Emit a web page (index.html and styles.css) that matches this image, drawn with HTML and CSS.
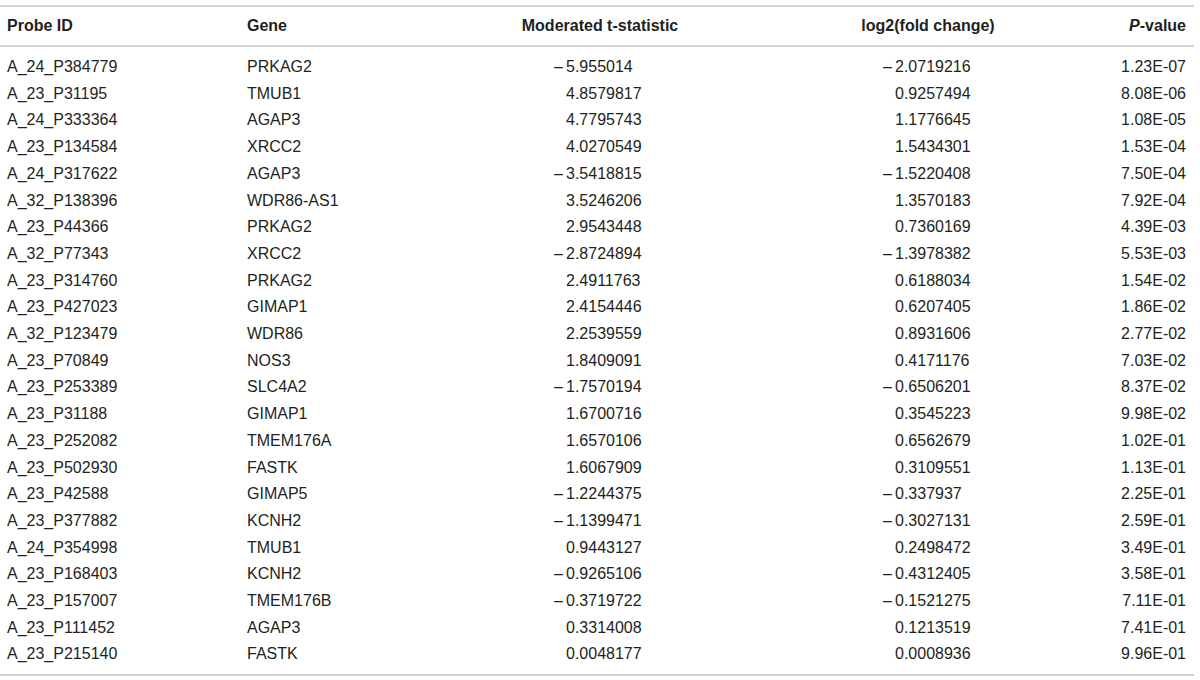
FILE: index.html
```html
<!DOCTYPE html>
<html lang="en">
<head>
<meta charset="utf-8">
<title>Probe table</title>
<link rel="stylesheet" href="styles.css">
</head>
<body>
<table class="data">
  <colgroup>
    <col class="c-probe"><col class="c-gene"><col class="c-t"><col class="c-log"><col class="c-p">
  </colgroup>
  <thead>
    <tr>
      <th class="probe">Probe ID</th>
      <th class="gene">Gene</th>
      <th class="mid">Moderated t-statistic</th>
      <th class="mid">log2(fold change)</th>
      <th class="pv"><i>P</i>-value</th>
    </tr>
  </thead>
  <tbody>
    <tr><td class="probe">A_24_P384779</td><td class="gene">PRKAG2</td><td class="t"><span class="neg">–</span>5.955014</td><td class="lg"><span class="neg">–</span>2.0719216</td><td class="pv">1.23E-07</td></tr>
    <tr><td class="probe">A_23_P31195</td><td class="gene">TMUB1</td><td class="t">4.8579817</td><td class="lg">0.9257494</td><td class="pv">8.08E-06</td></tr>
    <tr><td class="probe">A_24_P333364</td><td class="gene">AGAP3</td><td class="t">4.7795743</td><td class="lg">1.1776645</td><td class="pv">1.08E-05</td></tr>
    <tr><td class="probe">A_23_P134584</td><td class="gene">XRCC2</td><td class="t">4.0270549</td><td class="lg">1.5434301</td><td class="pv">1.53E-04</td></tr>
    <tr><td class="probe">A_24_P317622</td><td class="gene">AGAP3</td><td class="t"><span class="neg">–</span>3.5418815</td><td class="lg"><span class="neg">–</span>1.5220408</td><td class="pv">7.50E-04</td></tr>
    <tr><td class="probe">A_32_P138396</td><td class="gene">WDR86-AS1</td><td class="t">3.5246206</td><td class="lg">1.3570183</td><td class="pv">7.92E-04</td></tr>
    <tr><td class="probe">A_23_P44366</td><td class="gene">PRKAG2</td><td class="t">2.9543448</td><td class="lg">0.7360169</td><td class="pv">4.39E-03</td></tr>
    <tr><td class="probe">A_32_P77343</td><td class="gene">XRCC2</td><td class="t"><span class="neg">–</span>2.8724894</td><td class="lg"><span class="neg">–</span>1.3978382</td><td class="pv">5.53E-03</td></tr>
    <tr><td class="probe">A_23_P314760</td><td class="gene">PRKAG2</td><td class="t">2.4911763</td><td class="lg">0.6188034</td><td class="pv">1.54E-02</td></tr>
    <tr><td class="probe">A_23_P427023</td><td class="gene">GIMAP1</td><td class="t">2.4154446</td><td class="lg">0.6207405</td><td class="pv">1.86E-02</td></tr>
    <tr><td class="probe">A_32_P123479</td><td class="gene">WDR86</td><td class="t">2.2539559</td><td class="lg">0.8931606</td><td class="pv">2.77E-02</td></tr>
    <tr><td class="probe">A_23_P70849</td><td class="gene">NOS3</td><td class="t">1.8409091</td><td class="lg">0.4171176</td><td class="pv">7.03E-02</td></tr>
    <tr><td class="probe">A_23_P253389</td><td class="gene">SLC4A2</td><td class="t"><span class="neg">–</span>1.7570194</td><td class="lg"><span class="neg">–</span>0.6506201</td><td class="pv">8.37E-02</td></tr>
    <tr><td class="probe">A_23_P31188</td><td class="gene">GIMAP1</td><td class="t">1.6700716</td><td class="lg">0.3545223</td><td class="pv">9.98E-02</td></tr>
    <tr><td class="probe">A_23_P252082</td><td class="gene">TMEM176A</td><td class="t">1.6570106</td><td class="lg">0.6562679</td><td class="pv">1.02E-01</td></tr>
    <tr><td class="probe">A_23_P502930</td><td class="gene">FASTK</td><td class="t">1.6067909</td><td class="lg">0.3109551</td><td class="pv">1.13E-01</td></tr>
    <tr><td class="probe">A_23_P42588</td><td class="gene">GIMAP5</td><td class="t"><span class="neg">–</span>1.2244375</td><td class="lg"><span class="neg">–</span>0.337937</td><td class="pv">2.25E-01</td></tr>
    <tr><td class="probe">A_23_P377882</td><td class="gene">KCNH2</td><td class="t"><span class="neg">–</span>1.1399471</td><td class="lg"><span class="neg">–</span>0.3027131</td><td class="pv">2.59E-01</td></tr>
    <tr><td class="probe">A_24_P354998</td><td class="gene">TMUB1</td><td class="t">0.9443127</td><td class="lg">0.2498472</td><td class="pv">3.49E-01</td></tr>
    <tr><td class="probe">A_23_P168403</td><td class="gene">KCNH2</td><td class="t"><span class="neg">–</span>0.9265106</td><td class="lg"><span class="neg">–</span>0.4312405</td><td class="pv">3.58E-01</td></tr>
    <tr><td class="probe">A_23_P157007</td><td class="gene">TMEM176B</td><td class="t"><span class="neg">–</span>0.3719722</td><td class="lg"><span class="neg">–</span>0.1521275</td><td class="pv">7.11E-01</td></tr>
    <tr><td class="probe">A_23_P111452</td><td class="gene">AGAP3</td><td class="t">0.3314008</td><td class="lg">0.1213519</td><td class="pv">7.41E-01</td></tr>
    <tr><td class="probe">A_23_P215140</td><td class="gene">FASTK</td><td class="t">0.0048177</td><td class="lg">0.0008936</td><td class="pv">9.96E-01</td></tr>
  </tbody>
</table>
</body>
</html>
```

FILE: styles.css
```css
html, body {
  margin: 0;
  padding: 0;
  background: #ffffff;
}

body {
  font-family: "Liberation Sans", Arial, Helvetica, sans-serif;
  color: #231f20;
  font-size: 16px;
}

.data {
  width: 1194px;
  table-layout: fixed;
  border-collapse: collapse;
  margin-top: 5px;
  border-top: 2px solid #d2d2d2;
  border-bottom: 2px solid #d2d2d2;
}

.c-probe { width: 240px; }
.c-gene { width: 220px; }
.c-t { width: 280px; }
.c-log { width: 376px; }
.c-p { width: 78px; }

.data th,
.data td {
  padding: 0;
  white-space: nowrap;
}

.data th {
  height: 38px;
  font-weight: bold;
  text-align: left;
  border-bottom: 2px solid #d2d2d2;
}

.data th i {
  font-style: italic;
}

.data td {
  height: 26.7px;
  line-height: 26.7px;
  vertical-align: middle;
}

.data tbody tr:first-child td {
  padding-top: 7px;
}

.data tbody tr:last-child td {
  padding-bottom: 6px;
}

.data .probe,
.data .gene {
  padding-left: 7px;
  text-align: left;
}

.data th.mid {
  text-align: center;
}

.data td.t {
  padding-left: 106px;
  text-align: left;
}

.data td.lg {
  padding-left: 155px;
  text-align: left;
}

.data .pv {
  text-align: right;
  padding-right: 8px;
}

.neg {
  display: inline-block;
  width: 12px;
  margin-left: -12px;
}
```
